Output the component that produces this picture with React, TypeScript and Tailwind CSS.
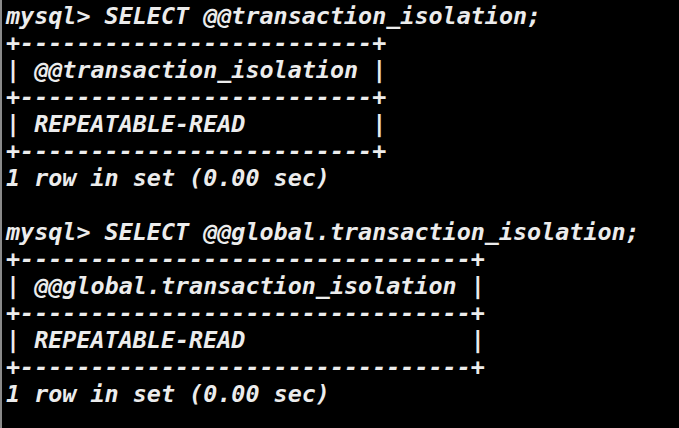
const lines = [
  "mysql> SELECT @@transaction_isolation;",
  "+-------------------------+",
  "| @@transaction_isolation |",
  "+-------------------------+",
  "| REPEATABLE-READ         |",
  "+-------------------------+",
  "1 row in set (0.00 sec)",
  "",
  "mysql> SELECT @@global.transaction_isolation;",
  "+--------------------------------+",
  "| @@global.transaction_isolation |",
  "+--------------------------------+",
  "| REPEATABLE-READ                |",
  "+--------------------------------+",
  "1 row in set (0.00 sec)",
];

export default function App() {
  return (
    <div className="w-[679px] h-[428px] overflow-hidden bg-black border-l-2 border-[#8a8a8a]">
      <pre className="pl-[4px] pt-[3px] m-0 font-['DejaVu_Sans_Mono',monospace] text-[23.4px] leading-[27px] font-bold italic text-[#ececec] whitespace-pre">
        {lines.map((l, i) => (
          <div key={i} className="h-[27px]">
            {l}
          </div>
        ))}
      </pre>
    </div>
  );
}
